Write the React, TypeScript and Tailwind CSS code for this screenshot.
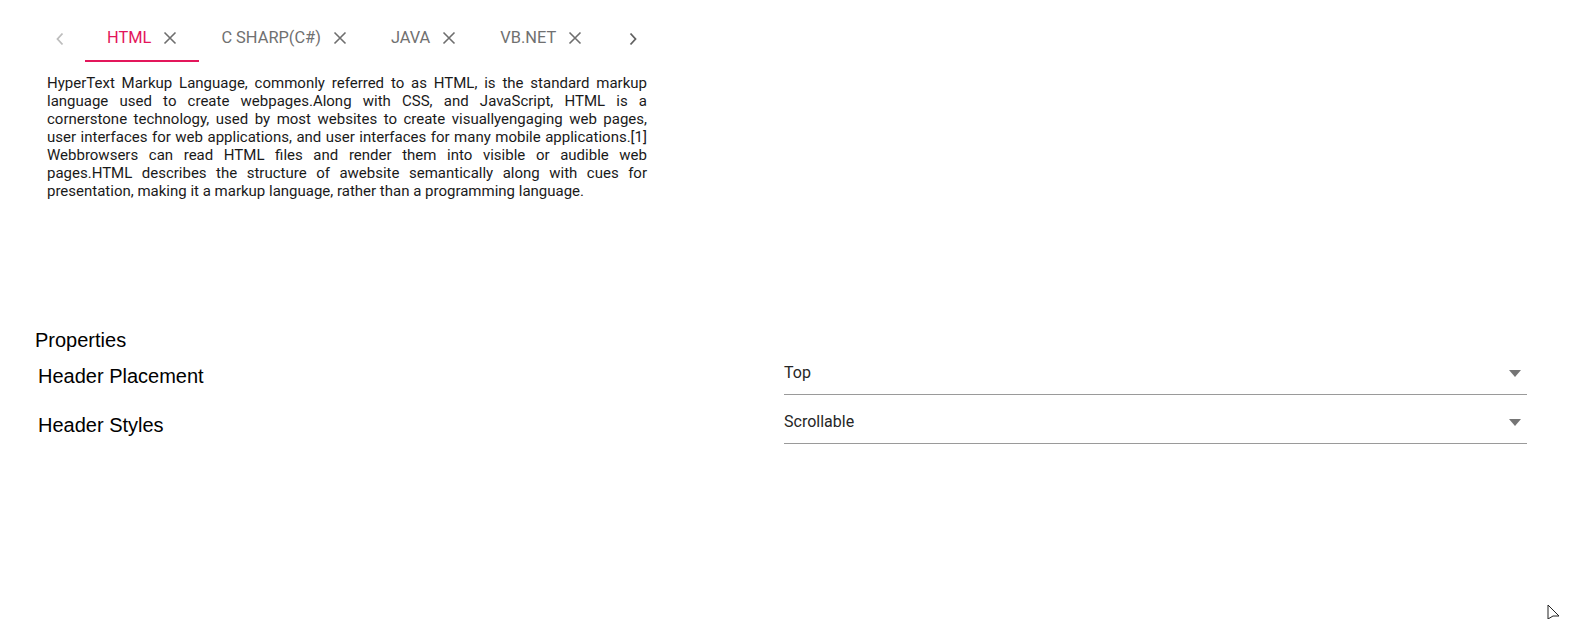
import * as React from "react";

const tabs = ["HTML", "C SHARP(C#)", "JAVA", "VB.NET"];

function CloseIcon() {
  return (
    <svg width="14" height="14" viewBox="0 0 14 14" className="shrink-0">
      <path d="M1.5 1.5 L12.5 12.5 M12.5 1.5 L1.5 12.5" stroke="#6e6e6e" strokeWidth="1.6" fill="none" />
    </svg>
  );
}

function Chevron({ dir, color }: { dir: "left" | "right"; color: string }) {
  const d = dir === "left" ? "M7.5 1.5 L2.5 7 L7.5 12.5" : "M2.5 1.5 L7.5 7 L2.5 12.5";
  return (
    <svg width="10" height="14" viewBox="0 0 10 14">
      <path d={d} stroke={color} strokeWidth="1.8" fill="none" />
    </svg>
  );
}

function Dropdown({ value }: { value: string }) {
  return (
    <div className="mt-[4px] flex w-[743px] flex-col">
      <div className="flex h-[24px] items-center justify-between pr-[6px]">
        <span className="text-[16px] text-[#262626]">{value}</span>
        <svg width="12" height="7" viewBox="0 0 12 7">
          <path d="M0 0 L12 0 L6 7 Z" fill="#757575" />
        </svg>
      </div>
      <div className="mt-[9px] h-px bg-[#9a9a9a]" />
    </div>
  );
}

export default function App() {
  const [active, setActive] = React.useState(0);

  return (
    <div className="relative h-[619px] w-full overflow-hidden bg-white font-['Roboto',sans-serif]">
      {/* Tab */}
      <div className="ml-[45px] w-[603px] pt-[15px]">
        <div className="flex h-[47px] items-center">
          <div className="flex h-full w-[30px] shrink-0 items-center justify-center">
            <Chevron dir="left" color="#bdbdbd" />
          </div>
          <div className="ml-[10px] flex h-full shrink-0">
            {tabs.map((t, i) => (
              <div
                key={t}
                onClick={() => setActive(i)}
                className={
                  "flex h-full shrink-0 cursor-pointer items-center gap-[12px] border-b-2 pl-[22px] pr-[22px] " +
                  (i === active ? "border-[#e3165b]" : "border-transparent")
                }
              >
                <span
                  className={
                    "whitespace-nowrap pt-[2px] text-[16.4px] uppercase " +
                    (i === active ? "text-[#e3165b]" : "text-[#707070]")
                  }
                >
                  {t}
                </span>
                <CloseIcon />
              </div>
            ))}
          </div>
          <div className="ml-[14px] flex h-full w-[30px] shrink-0 items-center justify-center">
            <Chevron dir="right" color="#616161" />
          </div>
        </div>
        <p className="mt-[12px] w-[602px] pl-[2px] text-justify text-[15px] leading-[18px] text-[#1a1a1a]">
          HyperText Markup Language, commonly referred to as HTML, is the standard markup language used to create
          webpages.Along with CSS, and JavaScript, HTML is a cornerstone technology, used by most websites to create
          visuallyengaging web pages, user interfaces for web applications, and user interfaces for many mobile
          applications.[1] Webbrowsers can read HTML files and render them into visible or audible web pages.HTML
          describes the structure of awebsite semantically along with cues for presentation, making it a markup
          language, rather than a programming language.
        </p>
      </div>

      {/* Properties */}
      <div className="ml-[35px] mt-[129px] w-[1492px] font-['Liberation_Sans',Arial,sans-serif] text-black">
        <div className="text-[20px] leading-[23px]">Properties</div>
        <div className="mt-[4px] flex h-[40px] items-center">
          <div className="w-[749px] pl-[3px] text-[20px]">Header Placement</div>
          <div className="font-['Roboto',sans-serif]">
            <Dropdown value="Top" />
          </div>
        </div>
        <div className="mt-[9px] flex h-[40px] items-center">
          <div className="w-[749px] pl-[3px] text-[20px]">Header Styles</div>
          <div className="font-['Roboto',sans-serif]">
            <Dropdown value="Scrollable" />
          </div>
        </div>
      </div>

      {/* mouse cursor */}
      <svg className="absolute left-[1547px] top-[604px]" width="14" height="16" viewBox="0 0 14 16">
        <path d="M1 1 L1 15 M1 1 L12 12 L6 12 L1 15" stroke="#222" strokeWidth="1" fill="white" />
      </svg>
    </div>
  );
}
